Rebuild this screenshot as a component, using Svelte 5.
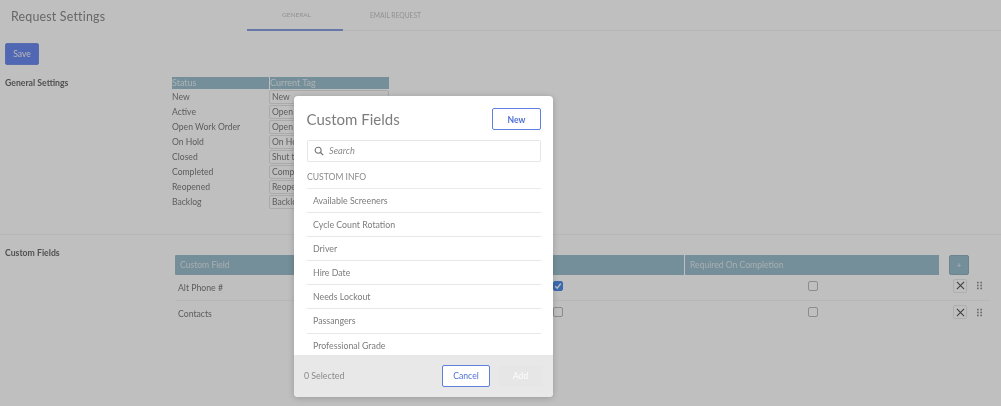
<script>
  const statuses = [
    ['New', 'New'], ['Active', 'Open'], ['Open Work Order', 'Open'], ['On Hold', 'On Hold'],
    ['Closed', 'Shut the door'], ['Completed', 'Completed'], ['Reopened', 'Reopened'], ['Backlog', 'Backlog']
  ];
  const fields = [['Alt Phone #', true], ['Contacts', false]];
  const items = ['Available Screeners', 'Cycle Count Rotation', 'Driver', 'Hire Date', 'Needs Lockout', 'Passangers', 'Professional Grade'];
</script>

<div class="page">
  <header class="top">
    <h1>Request Settings</h1>
    <nav class="tabs">
      <span class="tab active">GENERAL</span>
      <span class="tab">EMAIL REQUEST</span>
    </nav>
  </header>

  <button class="save">Save</button>

  <section class="general">
    <h2>General Settings</h2>
    <div class="status-table">
      <div class="status-head"><span>Status</span><span>Current Tag</span></div>
      {#each statuses as [s, t]}
        <div class="status-row"><span class="label">{s}</span><span class="tag">{t}</span></div>
      {/each}
    </div>
  </section>

  <section class="custom">
    <h2>Custom Fields</h2>
    <div class="field-table">
      <div class="field-head">
        <div class="cols">
          <span class="th">Custom Field</span>
          <span class="th">Required</span>
          <span class="th">Required On Completion</span>
        </div>
        <button class="plus">+</button>
      </div>
      {#each fields as [name, req]}
        <div class="field-row">
          <div class="cols">
            <span class="name">{name}</span>
            <span class="cell"><span class="check" class:on={req}>
              {#if req}<svg viewBox="0 0 8 8" width="8" height="8"><path d="M1.2 4.2 3.2 6.2 6.8 1.6" fill="none" stroke="#fff" stroke-width="1.4"/></svg>{/if}
            </span></span>
            <span class="cell"><span class="check"></span></span>
          </div>
          <button class="x" aria-label="Remove">
            <svg viewBox="0 0 10 10" width="9" height="9"><path d="M1 1 9 9M9 1 1 9" stroke="#555" stroke-width="1.2"/></svg>
          </button>
          <svg class="grip" viewBox="0 0 6 9" width="5" height="9"><g fill="#8f8f8f"><rect x="0" y="0" width="2" height="2"/><rect x="4" y="0" width="2" height="2"/><rect x="0" y="3.5" width="2" height="2"/><rect x="4" y="3.5" width="2" height="2"/><rect x="0" y="7" width="2" height="2"/><rect x="4" y="7" width="2" height="2"/></g></svg>
        </div>
      {/each}
    </div>
  </section>

  <div class="backdrop"></div>

  <div class="modal">
    <div class="modal-body">
      <div class="modal-top">
        <span class="modal-title">Custom Fields</span>
        <button class="outline new">New</button>
      </div>
      <div class="search">
        <svg viewBox="0 0 12 12" width="10" height="10"><circle cx="5" cy="5" r="3.6" fill="none" stroke="#777" stroke-width="1.3"/><path d="M7.8 7.8 11 11" stroke="#777" stroke-width="1.5"/></svg>
        <span>Search</span>
      </div>
      <div class="group">CUSTOM INFO</div>
      {#each items as it}
        <div class="item">{it}</div>
      {/each}
    </div>
    <div class="modal-foot">
      <span class="count">0 Selected</span>
      <button class="outline cancel">Cancel</button>
      <button class="add">Add</button>
    </div>
  </div>
</div>

<style>
  :global(body) { margin: 0; background: #fff; }
  .page {
    position: relative;
    width: 1001px;
    height: 406px;
    overflow: hidden;
    background: #fff;
    font-family: Lato, "Open Sans", sans-serif;
    font-size: 8.6px;
    color: #7c7c7c;
    filter: blur(0.45px);
  }
  button { font-family: inherit; cursor: pointer; padding: 0; }
  .top {
    display: flex;
    align-items: flex-start;
    height: 31px;
    box-sizing: border-box;
    padding-left: 11px;
  }
  h1 {
    margin: 8px 0 0;
    width: 236px;
    font-size: 12.4px;
    line-height: 17px;
    font-weight: 400;
    color: #8a8a8a;
    letter-spacing: 0.2px;
  }
  .tabs { flex: 1; display: flex; height: 31px; border-bottom: 1px solid #f2f2f2; box-sizing: border-box; }
  .tab {
    width: 96px;
    padding: 10px 0 0 3px;
    text-align: center;
    font-size: 6.5px;
    line-height: 10px;
    color: #c4c4c4;
    box-sizing: border-box;
    margin-bottom: -1px;
  }
  .tab.active { border-bottom: 2px solid #8a9fe0; }
  .tab + .tab { width: 102px; font-size: 6.7px; }
  .save {
    display: block;
    margin: 12px 0 0 5px;
    width: 34px;
    height: 22px;
    border: 1px solid #7791e8;
    border-radius: 2px;
    background: #6b8bf1;
    color: #f2f2f2;
    font-size: 8.6px;
  }
  h2 { margin: 0; font-size: 8.7px; line-height: 12px; font-weight: 700; color: #6c6c6c; }
  .general { display: flex; margin-top: 12px; height: 157px; border-bottom: 1px solid #f5f5f5; padding-left: 5px; }
  .general h2 { width: 167px; }
  .status-table { width: 217px; }
  .status-head, .status-row { display: grid; grid-template-columns: 97px 120px; }
  .status-head { height: 12px; line-height: 12px; background: #9bbfcd; color: #e6eef1; font-size: 9px; }
  .status-head span + span { border-left: 1px solid #fff; }
  .status-row { height: 15px; line-height: 16px; }
  .tag { border: 1px solid #e3e3e3; border-radius: 2px; padding-left: 2px; height: 14px; line-height: 13px; box-sizing: border-box; margin-top: 1px; white-space: nowrap; overflow: hidden; }
  .custom { display: flex; padding-left: 5px; padding-top: 12px; }
  .custom h2 { width: 170px; }
  .field-table { padding-top: 8px; }
  .cols { display: grid; grid-template-columns: repeat(3, 255px); width: 765px; }
  .field-head { display: flex; height: 20px; gap: 9px; }
  .th {
    background: #9bbfcd;
    border-right: 1px solid #fff;
    color: #dfe8eb;
    line-height: 20px;
    padding-left: 5px;
    font-size: 8.6px;
    border-radius: 1px;
  }
  .plus {
    width: 20px;
    height: 20px;
    border: 1px solid #8eb2c0;
    border-radius: 2px;
    background: #9bbfcd;
    color: #e8eff2;
    font-size: 8px;
    line-height: 18px;
  }
  .field-row { display: flex; align-items: center; height: 26px; border-bottom: 1px solid #f4f4f4; width: 815px; }
  .field-row:last-child { border-bottom: 0; }
  .field-head + .field-row { height: 25px; }
  .name { padding-left: 3px; font-size: 8.7px; line-height: 12px; }
  .cell { display: flex; justify-content: center; align-items: flex-start; height: 10px; margin-top: -1px; }
  .check { width: 8px; height: 8px; border: 1px solid #bbb; border-radius: 2px; background: #fff; display: block; line-height: 0; }
  .check.on { background: #4f8fea; border-color: #4f8fea; }
  .x {
    width: 14px;
    height: 14px;
    margin: 0 0 4px 13px;
    border: 1px solid #e8e8e8;
    border-radius: 2px;
    background: #fff;
    display: flex;
    align-items: center;
    justify-content: center;
  }
  .grip { margin: 0 0 4px 10px; }
  .backdrop { position: absolute; inset: 0; background: rgba(0, 0, 0, 0.25); }
  .modal {
    position: absolute;
    left: 294px;
    top: 96px;
    width: 259px;
    height: 301px;
    background: #fff;
    border-radius: 4px;
    overflow: hidden;
    display: flex;
    flex-direction: column;
    box-shadow: 0 1px 6px rgba(0, 0, 0, 0.2);
  }
  .modal-body { flex: 1; overflow: hidden; padding: 12px 12px 0 13px; min-height: 0; }
  .modal-top { display: flex; justify-content: space-between; align-items: center; height: 22px; }
  .modal-title { font-size: 15px; color: #7d7d7d; margin-left: -0.5px; }
  .outline {
    height: 22px;
    border: 1px solid #5f7fe0;
    border-radius: 2px;
    background: #fff;
    color: #4f6fd8;
    font-size: 8.6px;
  }
  .new { width: 49px; font-weight: 700; padding-top: 1px; }
  .search {
    display: flex;
    align-items: center;
    gap: 5px;
    height: 22px;
    margin-top: 10px;
    padding-left: 6px;
    padding-bottom: 1px;
    border: 1px solid #e6e6e6;
    border-radius: 2px;
    box-sizing: border-box;
    font-style: italic;
    font-size: 9.2px;
    color: #8a8a8a;
  }
  .group { height: 27px; line-height: 30px; font-size: 8.6px; color: #8a8a8a; border-bottom: 1px solid #eaeaea; box-sizing: border-box; }
  .item {
    height: 24.1px;
    line-height: 23.5px;
    padding-left: 6px;
    font-size: 8.8px;
    color: #7c7c7c;
    border-bottom: 1px solid #e8e8e8;
    box-sizing: border-box;
  }
  .modal-foot {
    flex: none;
    height: 42px;
    background: #e8e8e8;
    display: flex;
    align-items: center;
    padding-left: 10px;
    padding-right: 10px;
  }
  .count { flex: 1; font-size: 8.8px; color: #8a8a8a; margin-top: -1px; }
  .cancel { width: 48px; margin-right: 8px; }
  .add {
    width: 45px;
    height: 22px;
    border: 0;
    border-radius: 2px;
    background: #e6e6e6;
    color: #f8f8f8;
    font-size: 8.6px;
    font-weight: 700;
  }
</style>
